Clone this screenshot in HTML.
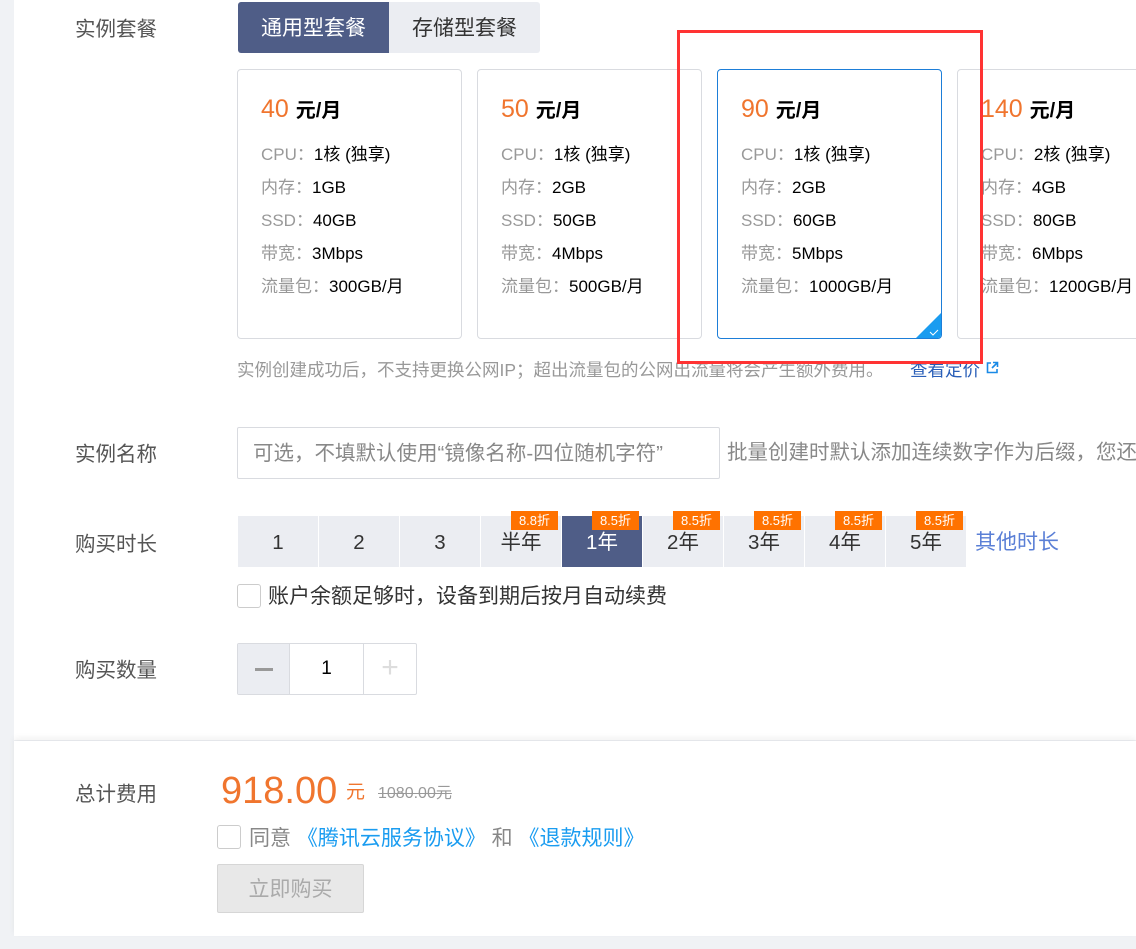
<!DOCTYPE html>
<html><head><meta charset="utf-8"><style>
*{box-sizing:border-box;margin:0;padding:0}
body{width:1136px;height:949px;background:#f0f2f5;font-family:"Liberation Sans","Noto Sans CJK SC",sans-serif;position:relative;overflow:hidden;color:#333}
.abs{position:absolute;line-height:1.2}
.p1{left:14px;top:0;width:1122px;height:740px;background:#fff}
.p2{left:14px;top:741px;width:1122px;height:195px;background:#fff;box-shadow:0 -3px 6px rgba(0,0,0,.06)}
.lbl{font-size:20.5px;color:#555}
.card{top:69px;width:225px;height:270px;border:1px solid #d9dbe0;border-radius:4px;background:#fff;overflow:hidden}
.card .pr{position:absolute;left:23px;top:24px;font-size:25px;color:#f0752e;line-height:30px}
.card .pr b{font-size:20px;color:#000;font-weight:bold}
.card .r{position:absolute;left:23px;font-size:17px;color:#000;white-space:nowrap;line-height:20px;height:20px}
.card .r span{color:#999}
.dur{top:516px;height:51px;width:80px;background:#ebedf2;font-size:20.5px;text-align:center;line-height:53px;color:#333}
.badge{top:511px;height:19px;background:#ff7200;color:#fff;font-size:13px;line-height:19px;text-align:center;width:47px}
</style></head><body>
<div class="abs p1"></div>
<div class="abs p2"></div>

<div class="abs lbl" style="left:75px;top:18px">实例套餐</div>
<div class="abs" style="left:238px;top:2px;width:151px;height:51px;background:#4f5d87;color:#fff;font-size:21px;text-align:center;line-height:53px;border-radius:3px 0 0 3px">通用型套餐</div>
<div class="abs" style="left:389px;top:2px;width:151px;height:51px;background:#ebedf2;color:#333;font-size:21px;text-align:center;line-height:53px;border-radius:0 3px 3px 0">存储型套餐</div>

<div class="abs card" style="left:237px"><div class="pr">40 <b>元/月</b></div>
<div class="r" style="top:75px"><span>CPU：</span>1核 (独享)</div><div class="r" style="top:108px"><span>内存：</span>1GB</div><div class="r" style="top:141px"><span>SSD：</span>40GB</div><div class="r" style="top:174px"><span>带宽：</span>3Mbps</div><div class="r" style="top:207px"><span>流量包：</span>300GB/月</div></div>
<div class="abs card" style="left:477px"><div class="pr">50 <b>元/月</b></div>
<div class="r" style="top:75px"><span>CPU：</span>1核 (独享)</div><div class="r" style="top:108px"><span>内存：</span>2GB</div><div class="r" style="top:141px"><span>SSD：</span>50GB</div><div class="r" style="top:174px"><span>带宽：</span>4Mbps</div><div class="r" style="top:207px"><span>流量包：</span>500GB/月</div></div>
<div class="abs card" style="left:717px;border-color:#1d7ed8"><div class="pr">90 <b>元/月</b></div>
<div class="r" style="top:75px"><span>CPU：</span>1核 (独享)</div><div class="r" style="top:108px"><span>内存：</span>2GB</div><div class="r" style="top:141px"><span>SSD：</span>60GB</div><div class="r" style="top:174px"><span>带宽：</span>5Mbps</div><div class="r" style="top:207px"><span>流量包：</span>1000GB/月</div>
<svg style="position:absolute;right:0;bottom:0" width="25" height="25"><polygon points="25,0 25,25 0,25" fill="#1a9cf0"/><path d="M14 19l3 3 5-5" stroke="#fff" stroke-width="1" fill="none"/></svg></div>
<div class="abs card" style="left:957px;width:200px"><div class="pr">140 <b>元/月</b></div>
<div class="r" style="top:75px"><span>CPU：</span>2核 (独享)</div><div class="r" style="top:108px"><span>内存：</span>4GB</div><div class="r" style="top:141px"><span>SSD：</span>80GB</div><div class="r" style="top:174px"><span>带宽：</span>6Mbps</div><div class="r" style="top:207px"><span>流量包：</span>1200GB/月</div></div>

<div class="abs" style="left:237px;top:360px;font-size:17.5px;color:#999;white-space:nowrap">实例创建成功后，不支持更换公网IP；超出流量包的公网出流量将会产生额外费用。</div>
<div class="abs" style="left:910px;top:360px;font-size:17.5px;color:#2a5fb8;white-space:nowrap">查看定价</div>
<svg class="abs" style="left:986px;top:361px" width="13" height="13"><path d="M5 2H1.5v9.5H11V8" stroke="#1a8ae6" stroke-width="1.6" fill="none"/><path d="M7 1.5h4.5V6M11.5 1.5L6 7" stroke="#1a8ae6" stroke-width="1.6" fill="none"/></svg>

<div class="abs" style="left:677px;top:30px;width:306px;height:334px;border:3px solid #f33"></div>

<div class="abs lbl" style="left:75px;top:443px">实例名称</div>
<div class="abs" style="left:237px;top:427px;width:483px;height:52px;border:1px solid #d9dbe0;border-radius:2px;font-size:20.5px;color:#888;line-height:52px;padding-left:15px;white-space:nowrap">可选，不填默认使用“镜像名称-四位随机字符”</div>
<div class="abs" style="left:727px;top:441px;font-size:20.5px;color:#888;white-space:nowrap">批量创建时默认添加连续数字作为后缀，您还</div>

<div class="abs lbl" style="left:75px;top:533px">购买时长</div>
<div class="abs dur" style="left:238px">1</div>
<div class="abs dur" style="left:319px">2</div>
<div class="abs dur" style="left:400px">3</div>
<div class="abs dur" style="left:481px">半年</div>
<div class="abs dur" style="left:562px;background:#4f5d87;color:#fff">1年</div>
<div class="abs dur" style="left:643px">2年</div>
<div class="abs dur" style="left:724px">3年</div>
<div class="abs dur" style="left:805px">4年</div>
<div class="abs dur" style="left:886px">5年</div>
<div class="abs badge" style="left:511px">8.8折</div>
<div class="abs badge" style="left:592px">8.5折</div>
<div class="abs badge" style="left:673px">8.5折</div>
<div class="abs badge" style="left:754px">8.5折</div>
<div class="abs badge" style="left:835px">8.5折</div>
<div class="abs badge" style="left:916px">8.5折</div>
<div class="abs" style="left:975px;top:530px;font-size:21px;color:#5a7fd6">其他时长</div>

<div class="abs" style="left:237px;top:584px;width:24px;height:24px;border:1px solid #ccc;border-radius:3px"></div>
<div class="abs" style="left:268px;top:584px;font-size:21px;color:#333;white-space:nowrap">账户余额足够时，设备到期后按月自动续费</div>

<div class="abs lbl" style="left:75px;top:659px">购买数量</div>
<div class="abs" style="left:237px;top:643px;width:180px;height:52px;border:1px solid #d9dbe0;border-radius:2px"></div>
<div class="abs" style="left:238px;top:644px;width:52px;height:50px;background:#ebedf2;border-right:1px solid #d9dbe0"><div style="position:absolute;left:17px;top:24px;width:18px;height:3px;background:#999"></div></div>
<div class="abs" style="left:290px;top:658px;width:73px;text-align:center;font-size:19px;color:#000">1</div>
<div class="abs" style="left:363px;top:644px;width:53px;height:50px;border-left:1px solid #d9dbe0;text-align:center;line-height:48px;font-size:30px;color:#ddd;font-weight:300">+</div>

<div class="abs lbl" style="left:75px;top:783px">总计费用</div>
<div class="abs" style="left:221px;top:769px;font-size:38px;color:#f0752e">918.00</div>
<div class="abs" style="left:346px;top:782px;font-size:19px;color:#f0752e">元</div>
<div class="abs" style="left:378px;top:784px;font-size:16px;color:#999;text-decoration:line-through">1080.00元</div>
<div class="abs" style="left:217px;top:825px;width:24px;height:24px;border:1px solid #ccc;border-radius:3px"></div>
<div class="abs" style="left:249px;top:826px;font-size:21px;color:#888;white-space:nowrap">同意 <span style="color:#1a9cf0">《腾讯云服务协议》</span> 和 <span style="color:#1a9cf0">《退款规则》</span></div>
<div class="abs" style="left:217px;top:864px;width:147px;height:49px;background:#e8e8e8;border:1px solid #d6d6d6;border-radius:2px;color:#aaa;font-size:21px;text-align:center;line-height:49px">立即购买</div>
</body></html>
